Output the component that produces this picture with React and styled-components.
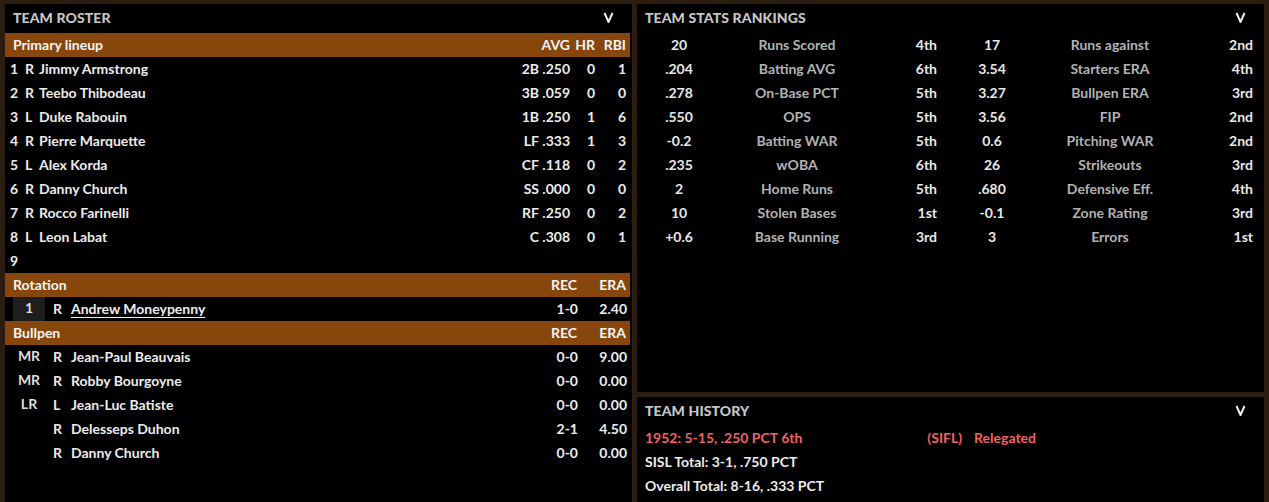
import React from 'react'
import styled, { createGlobalStyle } from 'styled-components';

const Global = createGlobalStyle`
  *, *::before, *::after {
    box-sizing: border-box;
  }
  html, body {
    margin: 0;
    padding: 0;
    background: #2b1e10;
  }
  body {
    font-family: Lato, "Open Sans", sans-serif;
    font-weight: 700;
    font-size: 14px;
    color: #ececec;
  }
`;

const Page = styled.div`
  display: grid;
  grid-template-columns: 627px 627px;
  gap: 5px;
  padding: 4px 5px 0 5px;
  height: 502px;
  overflow: hidden;
`;

const Column = styled.div`
  display: flex;
  flex-direction: column;
  gap: 5px;
  min-height: 0;
`;

const Panel = styled.div`
  background: #000;
  display: flex;
  flex-direction: column;
  height: ${p => p.$h ? p.$h + 'px' : 'auto'};
  flex: ${p => p.$grow ? 1 : 'none'};
  min-height: 0;
`;

const TitleRow = styled.div`
  display: flex;
  align-items: center;
  justify-content: space-between;
  height: 29px;
  padding: 0 18px 2px 8px;
  flex: none;
`;

const Title = styled.div`
  color: #c6c6c6;
  font-size: 14px;
  font-weight: 900;
  letter-spacing: 0.1px;
`;

const Bar = styled.div`
  display: grid;
  grid-template-columns: ${p => p.$cols};
  align-items: center;
  height: 24px;
  background: #86460c;
  margin-right: 2px;
  padding: 0 4px 2px 8px;
  color: #f4f4f4;
`;

const lineupCols = '1fr 30px 31px 25px 31px';
const pitchCols = '1fr 40px 49px';

const LineupRow = styled.div`
  display: grid;
  grid-template-columns: 15px 14px 1fr 30px 31px 25px 31px;
  align-items: center;
  height: 24px;
  padding: 0 6px 2px 5px;
`;

const PitchRow = styled.div`
  display: grid;
  grid-template-columns: 40px 18px 1fr 40px 49px;
  align-items: center;
  height: 24px;
  padding: 0 5px 0 8px;
`;

const Role = styled.div`
  width: 32px;
  height: 24px;
  line-height: 22px;
  text-align: center;
  background: ${p => p.$boxed ? '#1e1e1e' : 'transparent'};
  color: #dcdcdc;
`;

const Cell = styled.div`
  text-align: ${p => p.$align || 'left'};
  white-space: nowrap;
  margin-bottom: ${p => p.$lift ? 2 : 0}px;
`;

const Name = styled.div`
  white-space: nowrap;
  margin-bottom: 2px;
  text-decoration: ${p => p.$link ? 'underline' : 'none'};
  text-underline-offset: 3px;
`;

const Chevron = () => (
  <svg width="11" height="11" viewBox="0 0 11 11">
    <polyline points="1.5,1 5.5,10 9.5,1" fill="none" stroke="#f0f0f0" strokeWidth="2" />
  </svg>
);

const StatsGrid = styled.div`
  display: grid;
  grid-template-columns: 313px 314px;
`;

const StatRow = styled.div`
  display: grid;
  grid-template-columns: 84px 152px 1fr;
  align-items: center;
  height: 24px;
  padding: 0 ${p => p.$pr}px 2px 0;
`;

const StatVal = styled.div`
  text-align: center;
  color: #e8e8e8;
`;

const StatLabel = styled.div`
  text-align: center;
  color: #b2b2b2;
`;

const StatRank = styled.div`
  text-align: right;
  color: #e8e8e8;
`;

const HistRow = styled.div`
  display: flex;
  align-items: center;
  height: 24px;
  padding: 0 0 2px 8px;
  color: ${p => p.$red ? '#f26262' : '#ececec'};
`;

const HistGap = styled.span`
  display: inline-block;
  width: ${p => p.$w}px;
`;

const lineup = [
  ['1', 'R', 'Jimmy Armstrong', '2B', '.250', '0', '1'],
  ['2', 'R', 'Teebo Thibodeau', '3B', '.059', '0', '0'],
  ['3', 'L', 'Duke Rabouin', '1B', '.250', '1', '6'],
  ['4', 'R', 'Pierre Marquette', 'LF', '.333', '1', '3'],
  ['5', 'L', 'Alex Korda', 'CF', '.118', '0', '2'],
  ['6', 'R', 'Danny Church', 'SS', '.000', '0', '0'],
  ['7', 'R', 'Rocco Farinelli', 'RF', '.250', '0', '2'],
  ['8', 'L', 'Leon Labat', 'C', '.308', '0', '1'],
  ['9', '', '', '', '', '', ''],
];

const bullpen = [
  ['MR', 'R', 'Jean-Paul Beauvais', '0-0', '9.00'],
  ['MR', 'R', 'Robby Bourgoyne', '0-0', '0.00'],
  ['LR', 'L', 'Jean-Luc Batiste', '0-0', '0.00'],
  ['', 'R', 'Delesseps Duhon', '2-1', '4.50'],
  ['', 'R', 'Danny Church', '0-0', '0.00'],
];

const offense = [
  ['20', 'Runs Scored', '4th'],
  ['.204', 'Batting AVG', '6th'],
  ['.278', 'On-Base PCT', '5th'],
  ['.550', 'OPS', '5th'],
  ['-0.2', 'Batting WAR', '5th'],
  ['.235', 'wOBA', '6th'],
  ['2', 'Home Runs', '5th'],
  ['10', 'Stolen Bases', '1st'],
  ['+0.6', 'Base Running', '3rd'],
];

const defense = [
  ['17', 'Runs against', '2nd'],
  ['3.54', 'Starters ERA', '4th'],
  ['3.27', 'Bullpen ERA', '3rd'],
  ['3.56', 'FIP', '2nd'],
  ['0.6', 'Pitching WAR', '2nd'],
  ['26', 'Strikeouts', '3rd'],
  ['.680', 'Defensive Eff.', '4th'],
  ['-0.1', 'Zone Rating', '3rd'],
  ['3', 'Errors', '1st'],
];

const App = () => {
  return (
    <Page>
      <Global />
      <Panel>
        <TitleRow>
          <Title>TEAM ROSTER</Title>
          <Chevron />
        </TitleRow>
        <Bar $cols={lineupCols}>
          <span>Primary lineup</span>
          <span />
          <Cell $align="right">AVG</Cell>
          <Cell $align="right">HR</Cell>
          <Cell $align="right">RBI</Cell>
        </Bar>
        {lineup.map(r => (
          <LineupRow key={r[0]}>
            <Cell>{r[0]}</Cell>
            <Cell>{r[1]}</Cell>
            <Cell>{r[2]}</Cell>
            <Cell $align="right">{r[3]}</Cell>
            <Cell $align="right">{r[4]}</Cell>
            <Cell $align="right">{r[5]}</Cell>
            <Cell $align="right">{r[6]}</Cell>
          </LineupRow>
        ))}
        <Bar $cols={pitchCols}>
          <span>Rotation</span>
          <Cell $align="right">REC</Cell>
          <Cell $align="right">ERA</Cell>
        </Bar>
        <PitchRow>
          <Role $boxed>1</Role>
          <Cell $lift>R</Cell>
          <Name $link>Andrew Moneypenny</Name>
          <Cell $align="right" $lift>1-0</Cell>
          <Cell $align="right" $lift>2.40</Cell>
        </PitchRow>
        <Bar $cols={pitchCols}>
          <span>Bullpen</span>
          <Cell $align="right">REC</Cell>
          <Cell $align="right">ERA</Cell>
        </Bar>
        {bullpen.map((r, i) => (
          <PitchRow key={i}>
            <Role>{r[0]}</Role>
            <Cell $lift>{r[1]}</Cell>
            <Name>{r[2]}</Name>
            <Cell $align="right" $lift>{r[3]}</Cell>
            <Cell $align="right" $lift>{r[4]}</Cell>
          </PitchRow>
        ))}
      </Panel>

      <Column>
        <Panel $h={388}>
          <TitleRow>
            <Title>TEAM STATS RANKINGS</Title>
            <Chevron />
          </TitleRow>
          <StatsGrid>
            <div>
              {offense.map(r => (
                <StatRow key={r[1]} $pr={13}>
                  <StatVal>{r[0]}</StatVal>
                  <StatLabel>{r[1]}</StatLabel>
                  <StatRank>{r[2]}</StatRank>
                </StatRow>
              ))}
            </div>
            <div>
              {defense.map(r => (
                <StatRow key={r[1]} $pr={11}>
                  <StatVal>{r[0]}</StatVal>
                  <StatLabel>{r[1]}</StatLabel>
                  <StatRank>{r[2]}</StatRank>
                </StatRow>
              ))}
            </div>
          </StatsGrid>
        </Panel>
        <Panel $grow>
          <TitleRow>
            <Title>TEAM HISTORY</Title>
            <Chevron />
          </TitleRow>
          <HistRow $red>
            1952: 5-15, .250 PCT 6th
            <HistGap $w={125} />
            (SIFL)
            <HistGap $w={12} />
            Relegated
          </HistRow>
          <HistRow>SISL Total: 3-1, .750 PCT</HistRow>
          <HistRow>Overall Total: 8-16, .333 PCT</HistRow>
        </Panel>
      </Column>
    </Page>
  )
}

export default App
